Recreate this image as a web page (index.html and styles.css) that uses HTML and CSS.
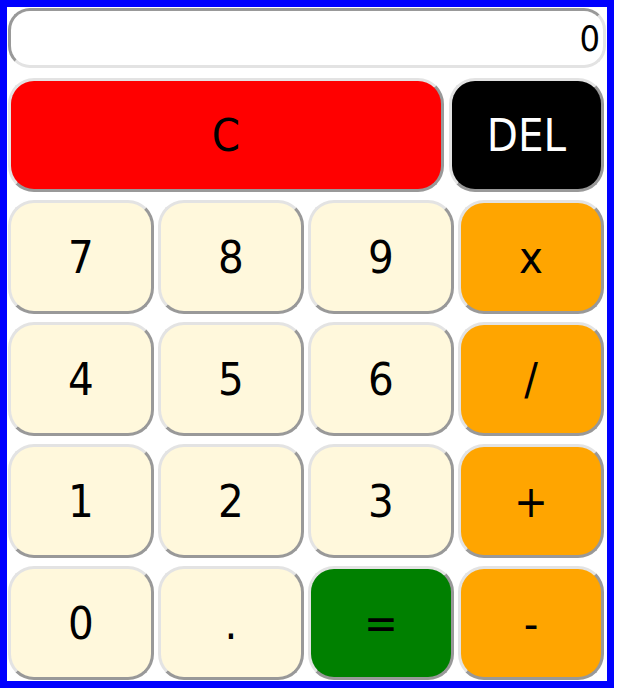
FILE: index.html
```html
<!DOCTYPE html>
<html>
<head>
<meta charset="utf-8">
<link rel="stylesheet" href="styles.css">
</head>
<body>
<div class="calc">
  <input class="display" type="text" value="0" readonly>
  <div class="top-row">
    <button class="btn btn-clear">C</button>
    <button class="btn btn-del">DEL</button>
  </div>
  <div class="keys">
    <button class="btn btn-num">7</button>
    <button class="btn btn-num">8</button>
    <button class="btn btn-num">9</button>
    <button class="btn btn-op">x</button>
    <button class="btn btn-num">4</button>
    <button class="btn btn-num">5</button>
    <button class="btn btn-num">6</button>
    <button class="btn btn-op">/</button>
    <button class="btn btn-num">1</button>
    <button class="btn btn-num">2</button>
    <button class="btn btn-num">3</button>
    <button class="btn btn-op">+</button>
    <button class="btn btn-num">0</button>
    <button class="btn btn-num">.</button>
    <button class="btn btn-eq">=</button>
    <button class="btn btn-op">-</button>
  </div>
</div>
</body>
</html>
```
FILE: styles.css
```css
html, body {
  margin: 0;
  padding: 0;
  background: #fff;
}
.calc {
  width: 600px;
  border: 7px solid #0000ff;
  padding: 1px 0;
  display: flex;
  flex-direction: column;
  gap: 8px;
  font-family: "DejaVu Sans Condensed", "DejaVu Sans", sans-serif;
}
.display {
  box-sizing: border-box;
  margin: 0 1px 2px 1px;
  width: 598px;
  height: 60px;
  border: 3px solid;
  border-color: #999 #e3e3e3 #e3e3e3 #999;
  border-radius: 22px;
  background: #fff;
  text-align: right;
  font-family: "DejaVu Sans Condensed", "DejaVu Sans", sans-serif;
  font-size: 36px;
  padding: 0 3px 0 0;
  color: #000;
  outline: none;
}
.top-row {
  display: flex;
  gap: 5px;
  margin-left: 1px;
}
.keys {
  display: grid;
  grid-template-columns: repeat(4, 146px);
  grid-auto-rows: 114px;
  column-gap: 4px;
  row-gap: 8px;
  margin-left: 1px;
}
.btn {
  box-sizing: border-box;
  height: 114px;
  margin: 0;
  padding: 0;
  border: 3px solid;
  border-color: #e3e3e3 #999 #999 #e3e3e3;
  border-radius: 26px;
  font-family: "DejaVu Sans Condensed", "DejaVu Sans", sans-serif;
  font-size: 45px;
  color: #000;
  cursor: pointer;
}
.btn-clear {
  width: 436px;
  background: #ff0000;
}
.btn-del {
  width: 155px;
  background: #000;
  color: #fff;
}
.btn-num {
  background: #fff8dc;
}
.btn-op {
  background: #ffa500;
}
.btn-eq {
  background: #008000;
}
```
